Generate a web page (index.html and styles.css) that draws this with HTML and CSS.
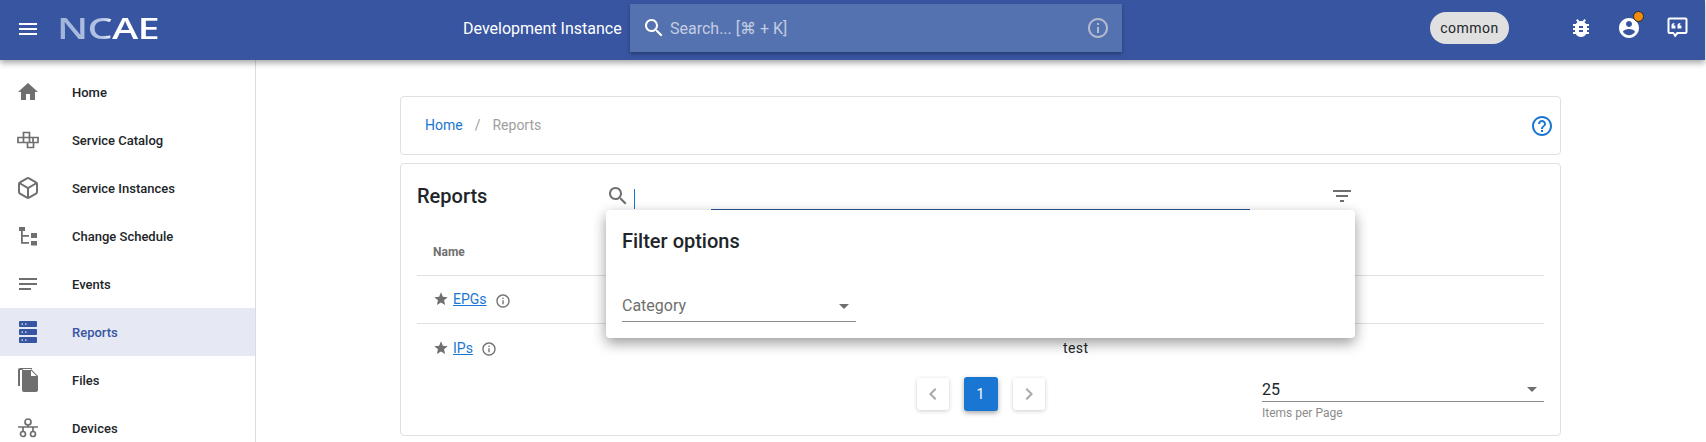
FILE: index.html
```html
<!DOCTYPE html>
<html lang="en">
<head>
	<meta charset="UTF-8">
	<title>Reports</title>
	<link rel="stylesheet" href="styles.css">
</head>
<body>
	<header class="topbar">
		<svg class="icon menu-icon" viewBox="0 0 24 24"><path d="M3 18h18v-2H3v2zm0-5h18v-2H3v2zm0-7v2h18V6H3z"/></svg>
		<div class="logo"><span class="logo-text">NCAE</span></div>
		<div class="instance-name">Development Instance</div>
		<div class="global-search">
			<svg class="icon" viewBox="0 0 24 24"><path d="M15.5 14h-.79l-.28-.27C15.41 12.59 16 11.11 16 9.5 16 5.91 13.09 3 9.5 3S3 5.91 3 9.5 5.91 16 9.5 16c1.61 0 3.09-.59 4.23-1.57l.27.28v.79l5 4.99L20.49 19l-4.99-5zm-6 0C7.01 14 5 11.99 5 9.5S7.01 5 9.5 5 14 7.01 14 9.5 11.99 14 9.5 14z"/></svg>
			<span class="global-search-text">Search... [⌘ + K]</span>
			<svg class="icon search-info" viewBox="0 0 24 24"><path d="M11 7h2v2h-2zm0 4h2v6h-2zm1-9C6.48 2 2 6.48 2 12s4.48 10 10 10 10-4.48 10-10S17.52 2 12 2zm0 18c-4.41 0-8-3.59-8-8s3.59-8 8-8 8 3.59 8 8-3.59 8-8 8z"/></svg>
		</div>
		<div class="topbar-actions">
			<span class="chip">common</span>
			<svg class="icon" viewBox="0 0 24 24"><path d="M20 8h-2.81c-.45-.78-1.07-1.45-1.82-1.96L17 4.41 15.59 3l-2.17 2.17C12.96 5.06 12.49 5 12 5c-.49 0-.96.06-1.41.17L8.41 3 7 4.41l1.62 1.63C7.88 6.55 7.26 7.22 6.81 8H4v2h2.09c-.05.33-.09.66-.09 1v1H4v2h2v1c0 .34.04.67.09 1H4v2h2.81c1.04 1.79 2.97 3 5.19 3s4.15-1.21 5.19-3H20v-2h-2.09c.05-.33.09-.66.09-1v-1h2v-2h-2v-1c0-.34-.04-.67-.09-1H20V8zm-6 8h-4v-2h4v2zm0-4h-4v-2h4v2z"/></svg>
			<div class="account">
				<svg class="icon" viewBox="0 0 24 24"><path d="M12 2C6.48 2 2 6.48 2 12s4.48 10 10 10 10-4.48 10-10S17.52 2 12 2zm0 3c1.66 0 3 1.34 3 3s-1.34 3-3 3-3-1.34-3-3 1.34-3 3-3zm0 14.2c-2.5 0-4.71-1.28-6-3.22.03-1.99 4-3.08 6-3.08 1.99 0 5.97 1.09 6 3.08-1.29 1.94-3.5 3.22-6 3.22z"/></svg>
				<span class="account-badge"></span>
			</div>
			<svg class="icon" viewBox="0 0 24 24"><path d="M4.500 1.500h16a2 2 0 0 1 2 2V16a2 2 0 0 1-2 2H13l-3 3.500L8 18H4.500a2 2 0 0 1-2-2V3.500a2 2 0 0 1 2-2zm0 2V16h4.300l1.200 2 1.900-2h8.600V3.500z"/><path d="M6.500 12.500v-3c0-1.600.9-2.400 2.800-2.600v1.600c-.6.100-.9.400-.9.900h2v3.100zM12.500 12.500v-3c0-1.600.9-2.400 2.800-2.600v1.600c-.6.100-.9.400-.9.900h2v3.100z"/></svg>
		</div>
	</header>

	<div class="shell">
		<nav class="sidebar">
			<a class="nav-item">
				<svg class="icon" viewBox="0 0 24 24"><path d="M10 20v-6h4v6h5v-8h3L12 3 2 12h3v8z"/></svg>
				<span>Home</span>
			</a>
			<a class="nav-item">
				<svg class="icon line-icon thin" viewBox="0 0 24 24"><path d="M7.500 4.500h6v5h-6zM2 9.500h5.500v5H2zM7.500 9.500h6v5h-6zM13.500 9.500h3.500v5h-3.500zM17 9.500h5v5h-5zM11.500 14.500h6v5h-6z"/></svg>
				<span>Service Catalog</span>
			</a>
			<a class="nav-item">
				<svg class="icon line-icon" viewBox="0 0 24 24"><path d="M21 16V8a2 2 0 0 0-1-1.730l-7-4a2 2 0 0 0-2 0l-7 4A2 2 0 0 0 3 8v8a2 2 0 0 0 1 1.730l7 4a2 2 0 0 0 2 0l7-4A2 2 0 0 0 21 16z"/><path d="M3.300 7L12 12l8.700-5M12 22V12"/></svg>
				<span>Service Instances</span>
			</a>
			<a class="nav-item">
				<svg class="icon" viewBox="0 0 24 24"><path d="M3 3h6v4H3zM5 7h1.800v4H13v1.800H6.800V18H13v1.800H5zM15 9h6v5h-6zM15 17h6v4.500h-6z"/></svg>
				<span>Change Schedule</span>
			</a>
			<a class="nav-item">
				<svg class="icon" viewBox="0 0 24 24"><path d="M3 18h12v-2H3v2zM3 6v2h18V6H3zm0 7h18v-2H3v2z"/></svg>
				<span>Events</span>
			</a>
			<a class="nav-item nav-item-active">
				<svg class="icon" viewBox="0 0 24 24"><path fill-rule="evenodd" d="M4 1h16a1 1 0 0 1 1 1v4a1 1 0 0 1-1 1H4a1 1 0 0 1-1-1V2a1 1 0 0 1 1-1zm1.500 2.500v1.200h1.500V3.500zm3.500 0v1.200h1.500V3.500zM4 9h16a1 1 0 0 1 1 1v4a1 1 0 0 1-1 1H4a1 1 0 0 1-1-1v-4a1 1 0 0 1 1-1zm1.500 2.500v1.200h1.500v-1.200zm3.500 0v1.200h1.500v-1.200zM4 17h16a1 1 0 0 1 1 1v4a1 1 0 0 1-1 1H4a1 1 0 0 1-1-1v-4a1 1 0 0 1 1-1zm1.500 2.500v1.200h1.500v-1.200zm3.500 0v1.200h1.500v-1.200z"/></svg>
				<span>Reports</span>
			</a>
			<a class="nav-item">
				<svg class="icon" viewBox="0 0 24 24"><path d="M16 0H4C2.900 0 2 .9 2 2v16h2V2h12V0zm0 0l1 0zM15 1l7 7v14c0 1.100-.9 2-2 2H7.990C6.890 24 6 23.100 6 22l.010-19c0-1.100.89-2 1.990-2h7zm0 1.500V8h5.500L15 2.500z" fill-rule="evenodd"/></svg>
				<span>Files</span>
			</a>
			<a class="nav-item">
				<svg class="icon line-icon thin" viewBox="0 0 24 24"><circle cx="12" cy="6" r="3"/><circle cx="7" cy="18" r="2.500"/><circle cx="17" cy="18" r="2.500"/><path d="M12 9v2M2 11h20M7 11v4.500M17 11v4.500"/></svg>
				<span>Devices</span>
			</a>
		</nav>

		<main class="content">
			<section class="card breadcrumb-card">
				<div class="breadcrumbs">
					<a class="crumb-link">Home</a>
					<span class="crumb-sep">/</span>
					<span class="crumb-current">Reports</span>
				</div>
				<svg class="icon help-icon" viewBox="0 0 24 24"><path d="M11 18h2v-2h-2v2zm1-16C6.480 2 2 6.480 2 12s4.480 10 10 10 10-4.480 10-10S17.520 2 12 2zm0 18c-4.410 0-8-3.590-8-8s3.590-8 8-8 8 3.590 8 8-3.590 8-8 8zm0-14c-2.210 0-4 1.790-4 4h2c0-1.100.9-2 2-2s2 .9 2 2c0 2-3 1.750-3 5h2c0-2.250 3-2.500 3-5 0-2.210-1.790-4-4-4z"/></svg>
			</section>

			<section class="card reports-card">
				<div class="toolbar">
					<h1 class="page-title">Reports</h1>
					<svg class="icon toolbar-search" viewBox="0 0 24 24"><path d="M15.500 14h-.79l-.28-.27C15.410 12.590 16 11.110 16 9.500 16 5.910 13.090 3 9.500 3S3 5.910 3 9.500 5.910 16 9.500 16c1.610 0 3.090-.59 4.230-1.570l.27.28v.79l5 4.990L20.490 19l-4.990-5zm-6 0C7.010 14 5 11.990 5 9.500S7.010 5 9.500 5 14 7.010 14 9.500 11.990 14 9.500 14z"/></svg>
					<div class="search-field">
						<span class="caret"></span>
						<span class="search-line"></span>
					</div>
					<svg class="icon filter-icon" viewBox="0 0 24 24"><path d="M10 18h4v-2h-4v2zM3 6v2h18V6H3zm3 7h12v-2H6v2z"/></svg>
				</div>

				<div class="table">
					<div class="table-row table-head">
						<span>Name</span>
						<span></span>
					</div>
					<div class="table-row">
						<span class="report-name">
							<svg class="icon star" viewBox="0 0 24 24"><path d="M12 17.270L18.180 21l-1.640-7.030L22 9.240l-7.190-.61L12 2 9.190 8.630 2 9.240l5.460 4.730L5.820 21z"/></svg>
							<a class="report-link">EPGs</a>
							<svg class="icon info" viewBox="0 0 24 24"><path d="M11 7h2v2h-2zm0 4h2v6h-2zm1-9C6.480 2 2 6.480 2 12s4.480 10 10 10 10-4.480 10-10S17.520 2 12 2zm0 18c-4.410 0-8-3.590-8-8s3.590-8 8-8 8 3.590 8 8-3.590 8-8 8z"/></svg>
						</span>
						<span></span>
					</div>
					<div class="table-row table-row-last">
						<span class="report-name">
							<svg class="icon star" viewBox="0 0 24 24"><path d="M12 17.270L18.180 21l-1.640-7.030L22 9.240l-7.190-.61L12 2 9.190 8.630 2 9.240l5.460 4.730L5.820 21z"/></svg>
							<a class="report-link">IPs</a>
							<svg class="icon info" viewBox="0 0 24 24"><path d="M11 7h2v2h-2zm0 4h2v6h-2zm1-9C6.480 2 2 6.480 2 12s4.480 10 10 10 10-4.480 10-10S17.520 2 12 2zm0 18c-4.410 0-8-3.590-8-8s3.590-8 8-8 8 3.590 8 8-3.590 8-8 8z"/></svg>
						</span>
						<span class="report-desc">test</span>
					</div>
				</div>

				<div class="table-footer">
					<div class="pagination">
						<button class="page-btn"><svg class="icon" viewBox="0 0 24 24"><path d="M15.410 7.410L14 6l-6 6 6 6 1.410-1.410L10.830 12z"/></svg></button>
						<button class="page-btn page-btn-current">1</button>
						<button class="page-btn"><svg class="icon" viewBox="0 0 24 24"><path d="M10 6L8.590 7.410 13.170 12l-4.580 4.590L10 18l6-6z"/></svg></button>
					</div>
					<div class="page-size">
						<div class="page-size-value">
							<span>25</span>
							<svg class="icon dropdown" viewBox="0 0 24 24"><path d="M7 10l5 5 5-5z"/></svg>
						</div>
						<div class="page-size-label">Items per Page</div>
					</div>
				</div>

				<div class="filter-popover">
					<h2 class="filter-title">Filter options</h2>
					<div class="filter-select">
						<span>Category</span>
						<svg class="icon dropdown" viewBox="0 0 24 24"><path d="M7 10l5 5 5-5z"/></svg>
					</div>
				</div>
			</section>
		</main>
	</div>
</body>
</html>
```

FILE: styles.css
```css
:root {
	--primary: #3755a1;
	--link: #1976d2;
	--text: #212529;
	--icon: #6f6f6f;
	--border: #e0e0e0;
}
html {
	box-sizing: border-box;
}
*, *:before, *:after {
	box-sizing: inherit;
}
body {
	margin: 0;
	height: 100vh;
	overflow: hidden;
	background: #fff;
	color: var(--text);
	font-family: Roboto, "Liberation Sans", sans-serif;
	font-size: 14px;
}
.icon {
	display: block;
	flex: none;
	width: 24px;
	height: 24px;
	fill: currentColor;
}
.line-icon {
	fill: none;
	stroke: currentColor;
	stroke-width: 2;
}
.line-icon.thin {
	stroke-width: 1.7;
}

/* top bar */
.topbar {
	position: relative;
	z-index: 2;
	display: flex;
	align-items: center;
	height: 60px;
	margin-right: 1px;
	padding: 0 0 4px 16px;
	background: var(--primary);
	color: #fff;
	box-shadow: 0 3px 6px rgba(0, 0, 0, .35);
}
.menu-icon {
	width: 24px;
	height: 24px;
	margin-right: 20px;
	margin-top: 1px;
}
.logo {
	width: 100px;
	margin-right: 303px;
	overflow: visible;
}
.logo-text {
	display: inline-block;
	margin-left: -3px;
	font-family: "Open Sans", sans-serif;
	font-size: 28px;
	line-height: 28px;
	font-weight: 600;
	letter-spacing: -.5px;
	transform: scaleX(1.42);
	transform-origin: left center;
	background: linear-gradient(90deg, #9fb2da 0%, #b5c4e4 45%, #fff 55%);
	-webkit-background-clip: text;
	background-clip: text;
	color: transparent;
}
.instance-name {
	width: 167px;
	font-size: 16px;
	white-space: nowrap;
}
.global-search {
	display: flex;
	align-items: center;
	width: 492px;
	height: 48px;
	padding: 0 12px 0 12px;
	background: #5572b0;
	box-shadow: 0 2px 4px rgba(0, 0, 0, .3);
}
.global-search-text {
	margin-left: 4px;
	flex: 1;
	font-size: 16px;
	color: #c3cde3;
}
.search-info {
	color: #b4bccb;
}
.topbar-actions {
	display: flex;
	align-items: center;
	margin-left: auto;
	margin-right: 16px;
	gap: 24px;
}
.chip {
	display: flex;
	align-items: center;
	justify-content: center;
	width: 79px;
	height: 32px;
	margin-right: 36px;
	border-radius: 16px;
	background: #e0e0e0;
	color: var(--text);
	font-size: 14px;
	letter-spacing: .5px;
}
.account {
	position: relative;
}
.account-badge {
	position: absolute;
	top: -5px;
	right: -3px;
	width: 11px;
	height: 11px;
	border-radius: 50%;
	background: #f28c0f;
	border: 1px solid #2a2a2a;
}

/* sidebar */
.shell {
	display: flex;
	height: calc(100vh - 60px);
}
.sidebar {
	flex: none;
	width: 256px;
	padding-top: 8px;
	border-right: 1px solid #dcdcdc;
}
.nav-item {
	display: flex;
	align-items: center;
	height: 48px;
	padding-left: 16px;
	gap: 32px;
	font-size: 13px;
	font-weight: 500;
	color: var(--text);
}
.nav-item .icon {
	color: var(--icon);
}
.nav-item-active {
	background: #e6e9f4;
	color: var(--primary);
}
.nav-item-active .icon {
	color: var(--primary);
}

/* main column */
.content {
	flex: 1;
	padding: 36px 145px 0 144px;
}
.card {
	border: 1px solid var(--border);
	border-radius: 4px;
	background: #fff;
}
.breadcrumb-card {
	display: flex;
	align-items: center;
	justify-content: space-between;
	height: 59px;
	padding: 0 6px 0 24px;
	margin-bottom: 8px;
}
.breadcrumbs {
	display: flex;
	gap: 12px;
	margin-top: -2px;
}
.crumb-link {
	color: var(--link);
}
.crumb-sep {
	color: #9e9e9e;
}
.crumb-current {
	color: #9e9e9e;
}
.help-icon {
	color: var(--link);
}
.reports-card {
	position: relative;
	height: 273px;
	padding: 0 16px;
}
.toolbar {
	display: flex;
	align-items: center;
	height: 64px;
}
.page-title {
	width: 189px;
	margin: 0;
	font-size: 20px;
	font-weight: 500;
}
.toolbar-search {
	color: var(--icon);
	margin-right: 4px;
}
.search-field {
	display: flex;
	align-self: flex-start;
	width: 616px;
	height: 46px;
	padding-top: 25px;
}
.caret {
	width: 1px;
	height: 20px;
	background: var(--link);
}
.search-line {
	flex: 1;
	height: 1px;
	margin: 20px 0 0 76px;
	background: #27558f;
}
.filter-icon {
	margin-left: 80px;
	color: var(--icon);
}

/* table */
.table-row {
	display: grid;
	grid-template-columns: 630px 1fr;
	align-items: center;
	height: 48px;
	padding-left: 16px;
	border-bottom: 1px solid var(--border);
}
.table-row-last {
	border-bottom: 0;
}
.table-head {
	font-size: 12px;
	font-weight: 700;
	color: var(--icon);
}
.report-name {
	display: flex;
	align-items: center;
	margin-top: -1px;
}
.star {
	width: 16px;
	height: 16px;
	margin-right: 4px;
	color: var(--icon);
}
.report-link {
	color: var(--link);
	text-decoration: underline;
}
.info {
	width: 16px;
	height: 16px;
	margin: 3px 0 0 8px;
	color: var(--icon);
}
.report-desc {
	letter-spacing: .4px;
}

/* pagination */
.table-footer {
	display: grid;
	grid-template-columns: 1fr auto 1fr;
	align-items: start;
	padding-top: 5px;
}
.pagination {
	grid-column: 2;
	display: flex;
	align-items: center;
	gap: 15px;
}
.page-btn {
	display: flex;
	align-items: center;
	justify-content: center;
	width: 32px;
	height: 32px;
	padding: 0;
	border: 0;
	border-radius: 3px;
	background: #fff;
	color: #a8a8a8;
	box-shadow: 0 1px 4px rgba(0, 0, 0, .2);
}
.page-btn-current {
	width: 34px;
	height: 34px;
	background: var(--link);
	color: #fff;
	font-family: inherit;
	font-size: 14px;
	box-shadow: 0 2px 5px rgba(0, 0, 0, .35);
}
.page-size {
	justify-self: end;
	width: 282px;
}
.page-size-value {
	display: flex;
	align-items: center;
	justify-content: space-between;
	height: 25px;
	border-bottom: 1px solid #8c8c8c;
	font-size: 16px;
}
.dropdown {
	color: var(--icon);
}
.page-size-label {
	margin-top: 4px;
	font-size: 12px;
	color: #8c8c8c;
}

/* filter dropdown */
.filter-popover {
	position: absolute;
	top: 46px;
	left: 205px;
	width: 749px;
	height: 128px;
	padding: 19px 16px;
	border-radius: 4px;
	background: #fff;
	box-shadow: 0 5px 14px rgba(0, 0, 0, .4);
}
.filter-title {
	margin: 0;
	font-size: 20px;
	font-weight: 500;
}
.filter-select {
	display: flex;
	align-items: center;
	justify-content: space-between;
	width: 234px;
	height: 32px;
	margin-top: 37px;
	border-bottom: 1px solid #8c8c8c;
	font-size: 16px;
	color: #6f6f6f;
}
```
